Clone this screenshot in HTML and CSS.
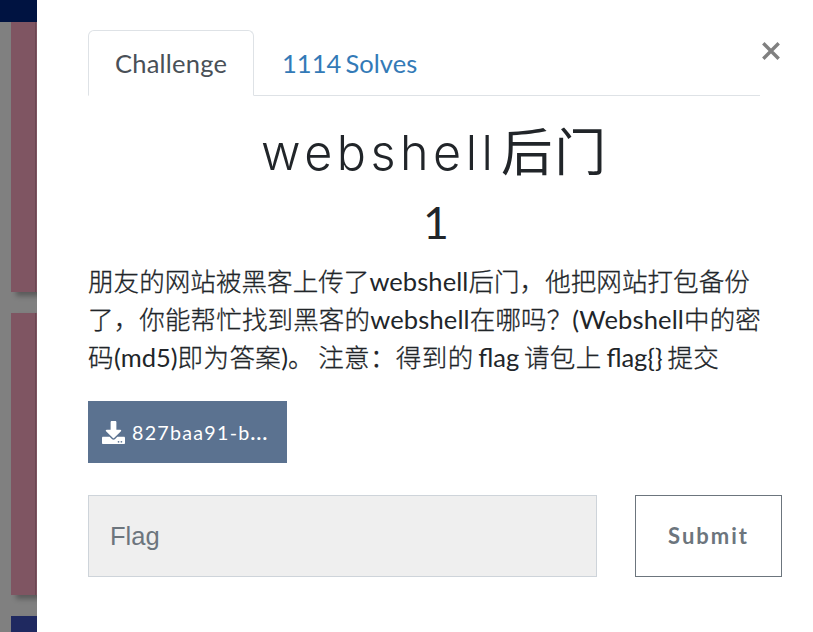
FILE: index.html
```html
<!DOCTYPE html>
<html lang="zh-CN">
<head>
<meta charset="utf-8">
<title>Challenge</title>
<link rel="stylesheet" href="styles.css">
</head>
<body>
<div class="page">
  <aside class="backdrop">
    <div class="navbar"></div>
    <div class="cards">
      <div class="card first"></div>
      <div class="card"></div>
      <div class="card blue"></div>
    </div>
  </aside>
  <main class="modal">
    <header class="top">
      <nav class="tabs">
        <a class="tab active">Challenge</a>
        <a class="tab">1114 Solves</a>
      </nav>
      <button class="close" aria-label="Close"><svg width="18" height="18" viewBox="0 0 18 18"><path d="M1.3 1.3 16.7 16.7M16.7 1.3 1.3 16.7"/></svg></button>
    </header>
    <h2 class="name"><span class="latin">webshell</span><span class="han">后门</span></h2>
    <h3 class="value">1</h3>
    <p class="desc">
      <span class="line l1">朋友的网站被黑客上传了<span class="en">webshell</span>后门，他把网站打包备份</span>
      <span class="line l2">了，你能帮忙找到黑客的<span class="en">webshell</span>在哪吗？<span class="en">(Webshell</span>中的密</span>
      <span class="line l3">码<span class="en">(md5)</span>即为答案<span class="en">)</span>。 注意：得到的<span class="en"> flag </span>请包上<span class="en"> flag{} </span>提交</span>
    </p>
    <a class="file">
      <svg class="icon" width="23" height="23" viewBox="0 0 512 512"><path fill="#fff" d="M216 0h80c13.300 0 24 10.700 24 24v168h87.700c17.800 0 26.700 21.500 14.100 34.100L269.700 378.300c-7.500 7.500-19.800 7.500-27.300 0L90.100 226.100c-12.600-12.600-3.700-34.100 14.100-34.100H192V24c0-13.300 10.700-24 24-24zm296 376v112c0 13.300-10.700 24-24 24H24c-13.300 0-24-10.700-24-24V376c0-13.300 10.700-24 24-24h146.700l49 49c20.100 20.100 52.500 20.100 72.600 0l49-49H488c13.300 0 24 10.700 24 24zm-124 88c0-11-9-20-20-20s-20 9-20 20 9 20 20 20 20-9 20-20zm64 0c0-11-9-20-20-20s-20 9-20 20 9 20 20 20 20-9 20-20z"/></svg>
      <span class="label">827baa91-b<b>...</b></span>
    </a>
    <form class="answer">
      <input class="flag" type="text" placeholder="Flag">
      <button class="submit" type="button">Submit</button>
    </form>
  </main>
</div>
</body>
</html>
```
FILE: styles.css
```css
* { box-sizing: border-box; }
body { margin: 0; overflow: hidden; }
.page {
  display: grid;
  grid-template-columns: 37px 1fr;
  width: 813px;
  height: 632px;
  font-family: Lato, "Noto Sans CJK SC", sans-serif;
  font-size: 25.5px;
  line-height: 38px;
  color: #212529;
  background: #fff;
}
.backdrop {
  overflow: hidden;
  background: #808080;
}
.navbar { height: 22px; background: #001341; }
.cards {
  display: flex;
  flex-direction: column;
  gap: 21px;
  width: 90px;
  padding-left: 11px;
}
.card {
  height: 282px;
  background: linear-gradient(90deg, transparent 24px, rgba(0,0,0,.16) 24px, rgba(0,0,0,.16) 25px, transparent 25px), #7f5562;
  box-shadow: 5px 4px 5px rgba(0,0,0,.3);
}
.card.first { height: 270px; }
.card.blue { background: #1f2960; }
.modal { padding: 30px 0 0 51px; background: #fff; }
.top { display: flex; height: 66px; }
.tabs { display: flex; width: 672px; height: 66px; border-bottom: 1px solid #dee2e6; }
.tab {
  height: 66px;
  padding: 14px 28px;
  color: #337ab7;
  word-spacing: -2.500px;
  letter-spacing: 0.050px;
  white-space: nowrap;
}
.tab.active {
  width: 166px;
  padding: 13px 0 0 26px;
  border: 1px solid #dee2e6;
  border-bottom-color: #fff;
  border-radius: 6px 6px 0 0;
  background: #fff;
  color: #495057;
  letter-spacing: 0.220px;
}
.close {
  display: flex;
  margin: 12px 0 0 2px;
  padding: 0;
  border: 0;
  background: none;
}
.close svg { fill: none; stroke: #808080; stroke-width: 3.4; }
.name {
  display: flex;
  justify-content: flex-start;
  width: 694px;
  height: 61px;
  margin: 23px 0 0;
  padding-left: 173px;
  font-size: 51px;
  font-weight: 300;
  line-height: 61px;
}
.latin {
  width: 240px;
  padding-top: 3px;
  font-family: Inter, Lato, sans-serif;
  font-size: 48.500px;
  letter-spacing: 4.500px;
}
.han {
  font-family: "Noto Sans CJK SC", sans-serif;
  font-size: 51.500px;
  font-weight: 400;
  line-height: 60px;
  letter-spacing: 2px;
}
.value {
  width: 696px;
  height: 54px;
  margin: 15px 0 0;
  font-size: 44.600px;
  font-weight: 400;
  line-height: 54px;
  text-align: center;
}
.desc {
  margin: 12px 0 0;
  font-family: "Noto Sans CJK SC", sans-serif;
  font-weight: 300;
  letter-spacing: 0.080px;
  -webkit-text-stroke: 0.3px #212529;
}
.line { display: block; height: 38px; white-space: nowrap; }
.l2 { letter-spacing: 0.150px; }
.l3 { word-spacing: -1.800px; letter-spacing: 0.400px; }
.en { font-family: Lato, sans-serif; font-weight: 400; -webkit-text-stroke: 0; }
.l3 .en { letter-spacing: 0; }
.file {
  display: flex;
  align-items: center;
  gap: 7px;
  width: 199px;
  height: 62px;
  margin-top: 26px;
  padding: 0 0 0 14px;
  background: #5b7290;
  color: #fff;
  font-size: 19.700px;
  letter-spacing: 1.250px;
}
.label { padding-top: 2px; }
.answer { display: flex; gap: 38px; margin-top: 32px; }
.flag {
  width: 509px;
  height: 82px;
  padding: 0 21px;
  border: 1px solid #ced4da;
  border-radius: 0;
  background: #efefef;
  font: 25.5px "Liberation Sans", sans-serif;
}
.flag::placeholder { color: #6c757d; }
.submit {
  width: 147px;
  height: 82px;
  padding: 0 0 2px;
  border: 1px solid #6c757d;
  background: #fff;
  color: #6c757d;
  font: 700 22px Lato, sans-serif;
  letter-spacing: 2px;
}
```
